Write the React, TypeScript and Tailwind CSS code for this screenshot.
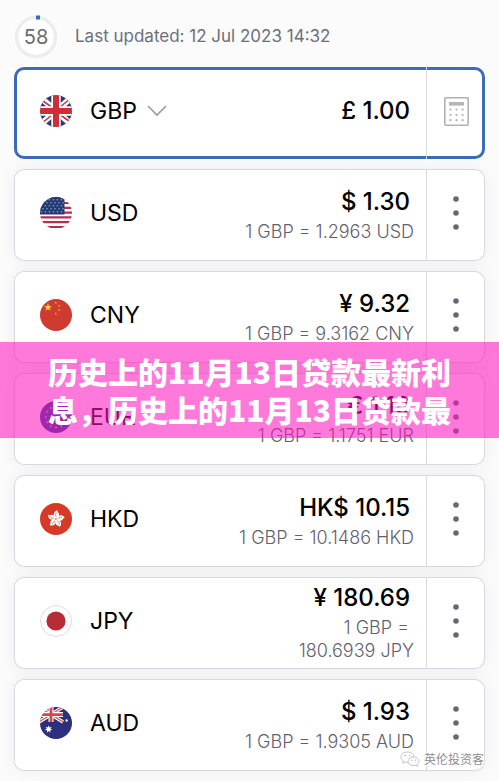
import React from "react";

type Currency = {
  code: string;
  amount: string;
  rate?: string;
};

const currencies: Currency[] = [
  { code: "GBP", amount: "£ 1.00" },
  { code: "USD", amount: "$ 1.30", rate: "1.2963" },
  { code: "CNY", amount: "¥ 9.32", rate: "9.3162" },
  { code: "EUR", amount: "€ 1.18", rate: "1.1751" },
  { code: "HKD", amount: "HK$ 10.15", rate: "10.1486" },
  { code: "JPY", amount: "¥ 180.69", rate: "180.6939" },
  { code: "AUD", amount: "$ 1.93", rate: "1.9305" },
];

const star = "M0-1 .23-.31 .95-.31 .36.12 .59.81 0 .38-.59.81-.36.12-.95-.31-.23-.31Z";
const star7 =
  "M0-1 .2-.41 .78-.62 .45-.1 .97.22 .36.28 .43.9 0 .46-.43.9-.36.28-.97.22-.45-.1-.78-.62-.2-.41Z";

const UnionJack: React.FC<{}> = () => (
  <>
    <path fill="#2b3a7d" d="M0 0h32v32H0z" />
    <path stroke="#fff" strokeWidth="6" d="M0 2 32 30M32 2 0 30" />
    <path stroke="#cc3340" strokeWidth="1.6" d="M0 4 13 13M31 3 19 13M32 28 19 19M1 29 13 19" />
    <path stroke="#fff" strokeWidth="9.4" d="M16 0v32M0 16h32" />
    <path stroke="#cc2f37" strokeWidth="6" d="M16 0v32M0 16h32" />
  </>
);

const flags: Record<string, React.ReactNode> = {
  GBP: <UnionJack />,
  USD: (
    <>
      <path fill="#fff" d="M0 0h32v32H0z" />
      <path
        stroke="#b5304f"
        strokeWidth="2.2"
        d="M0 1.2h32M0 6h32M0 10.8h32M0 15.6h32M0 20.4h32M0 25.2h32M0 30h32"
      />
      <path fill="#263a72" d="M0 0h24.5v17.4H0z" />
      {[2, 5, 8, 11, 14].map((y, row) =>
        [2, 6, 10, 14, 18, 22].map((x) => (
          <circle key={`${x}-${y}`} cx={x + (row % 2) * 1.6 - 0.6} cy={y + 0.7} r="0.8" fill="#7fa3d8" />
        ))
      )}
    </>
  ),
  CNY: (
    <>
      <path fill="#cf3b30" d="M0 0h32v32H0z" />
      <path fill="#fbd33c" transform="translate(8 8.3) scale(4.3)" d={star} />
      {[
        [15.8, 3.6],
        [19, 6.6],
        [19, 11],
        [15.8, 14.6],
      ].map(([x, y]) => (
        <path key={y} fill="#f3a83a" transform={`translate(${x} ${y}) scale(1.5)`} d={star} />
      ))}
    </>
  ),
  EUR: (
    <>
      <path fill="#22409a" d="M0 0h32v32H0z" />
      {[0, 30, 60, 90, 120, 150, 180, 210, 240, 270, 300, 330].map((a) => (
        <path
          key={a}
          fill="#f5cf3d"
          transform={`rotate(${a} 16 16) translate(16 5.5) scale(1.5)`}
          d={star}
        />
      ))}
    </>
  ),
  HKD: (
    <>
      <path fill="#d63a27" d="M0 0h32v32H0z" />
      {[8, 80, 152, 224, 296].map((a) => (
        <g key={a} transform={`rotate(${a} 16 16)`}>
          <path fill="#fff" d="M16 15.6C12.6 13.4 11.8 8.6 16.6 7.2c-1 1.6 2.6 2.8 1.8 5.4-.4 1.4-1.4 2-2.4 3Z" />
          <path stroke="#d63a27" strokeWidth=".6" fill="none" d="M15.8 13.6c-1-1.4-1-2.8-.2-4" />
        </g>
      ))}
    </>
  ),
  JPY: (
    <>
      <path fill="#fff" d="M0 0h32v32H0z" />
      <circle cx="16" cy="16" r="15.5" fill="none" stroke="#e3d5dc" />
      <circle cx="16" cy="16" r="9.6" fill="#b62c37" />
    </>
  ),
  AUD: (
    <>
      <path fill="#2b2f7c" d="M0 0h32v32H0z" />
      <path stroke="#fff" strokeWidth="3.4" d="M-1 0 23 15M23 0-1 15" />
      <path stroke="#d8434c" strokeWidth="1.2" d="M-1 0 23 15M23 0-1 15" />
      <path stroke="#fff" strokeWidth="5" d="M11 0v15M0 7.6h23" />
      <path stroke="#d8434c" strokeWidth="2.8" d="M11 0v15M0 7.6h23" />
      <path fill="#fff" transform="translate(8.6 22.2) scale(4)" d={star7} />
      <path fill="#fff" transform="translate(26.6 13.6) scale(1.8)" d={star7} />
    </>
  ),
};

const Flag: React.FC<{ code: string }> = ({ code }) => (
  <svg viewBox="0 0 32 32" className="w-8 h-8 shrink-0" fill="none" aria-hidden="true">
    <clipPath id={`flag-${code}`}>
      <circle cx="16" cy="16" r="16" />
    </clipPath>
    <g clipPath={`url(#flag-${code})`}>{flags[code]}</g>
  </svg>
);

const CalculatorIcon: React.FC<{}> = () => (
  <svg viewBox="0 0 25 29" className="w-[25px] h-[29px]" fill="none" aria-hidden="true">
    <rect x=".8" y=".8" width="23.4" height="27.4" rx="1" stroke="#b0b1b5" strokeWidth="1.6" />
    <path fill="#b5b6ba" d="M5 5h15v3.6H5z" />
    {[12.5, 18, 23.2].map((y) =>
      [6.4, 12.5, 18.6].map((x) => (
        <circle key={`${x}-${y}`} cx={x} cy={y} r="1.1" fill="#aeafb4" />
      ))
    )}
  </svg>
);

const DotsIcon: React.FC<{}> = () => (
  <svg viewBox="0 0 6 36" className="w-[6px] h-9" fill="#666876" aria-hidden="true">
    <circle cx="3" cy="4" r="2.8" />
    <circle cx="3" cy="18" r="2.8" />
    <circle cx="3" cy="32" r="2.8" />
  </svg>
);

const CurrencyRow: React.FC<{ currency: Currency }> = ({ currency }) => {
  const { code, amount, rate } = currency;
  const selected = !rate;

  return (
    <li
      className={
        selected
          ? "flex h-[92px] rounded-[10px] bg-white ring-3 ring-inset ring-[#3a6cba]"
          : "flex h-[92px] rounded-[10px] bg-white ring-1 ring-inset ring-[#d9d9dc] shadow-[0_0_16px_rgba(20,20,60,0.06)]"
      }
    >
      <div className="flex flex-1 items-center pl-[26px] pr-3">
        <div className="flex items-center gap-[18px] pb-1">
          <Flag code={code} />
          {selected ? (
            <button className="flex items-center gap-[10px] text-[23px] text-black">
              {code}
              <svg viewBox="0 0 20 12" className="w-5 h-3" fill="none" aria-hidden="true">
                <path d="m1 1 9 9 9-9" stroke="#9a9ca5" strokeWidth="1.6" />
              </svg>
            </button>
          ) : (
            <span className="text-[23px] text-black">{code}</span>
          )}
        </div>
        <div className="flex flex-1 flex-col items-end text-right">
          <div
            className={
              selected
                ? "pr-1 pb-1 text-[24px] leading-7 font-medium text-black"
                : "pr-1 text-[24px] leading-7 font-medium text-black"
            }
          >
            {amount}
          </div>
          {rate && (
            <div className="mt-1 max-w-[180px] text-[18px] leading-[23px] font-light text-[#5f626e]">
              1 GBP =&nbsp;
              <wbr />
              <span className="whitespace-nowrap">
                {rate} {code}
              </span>
            </div>
          )}
        </div>
      </div>
      <button
        aria-label={selected ? "Calculator" : `${code} options`}
        className="flex items-center justify-center w-[59px] pb-1 border-l border-[#d9d9dc]"
      >
        {selected ? <CalculatorIcon /> : <DotsIcon />}
      </button>
    </li>
  );
};

const App: React.FC<{}> = () => {
  return (
    <main className="relative bg-[#fbfbfc] px-[14px] pb-[10px] font-['Inter',sans-serif]">
      <header className="flex items-center h-[67px] pt-[6px] gap-[17px]">
        <div className="relative flex items-center justify-center w-11 h-11">
          <svg viewBox="0 0 44 44" className="absolute w-11 h-11" fill="none" aria-hidden="true">
            <circle cx="22" cy="22" r="19.5" fill="#fff" stroke="#ededee" strokeWidth="3.5" />
            <path d="M22 2.500h4" stroke="#3a6cba" strokeWidth="4" />
          </svg>
          <span className="relative text-[20px] text-[#6a6b6e]">58</span>
        </div>
        <p className="text-[17px] text-[#6c6f7a]">Last updated: 12 Jul 2023 14:32</p>
      </header>

      <ul className="flex flex-col gap-[10px]">
        {currencies.map((item) => (
          <CurrencyRow key={item.code} currency={item} />
        ))}
      </ul>

      <h1
        className="absolute inset-x-0 top-[342px] px-12 py-[10px] bg-[rgba(255,20,190,0.57)] whitespace-nowrap
          font-['Noto_Sans_CJK_SC',sans-serif] text-[30px] leading-[38px] font-black text-white"
      >
        历史上的11月13日贷款最新利
        <br />
        息，历史上的11月13日贷款最
      </h1>

      <div className="absolute right-[15px] bottom-[14px] flex items-center gap-1">
        <svg viewBox="0 0 20 16" className="w-5 h-4" fill="#fff" stroke="#b4b4b8" strokeWidth=".8" aria-hidden="true">
          <path d="M7.5 1C3.6 1 1 3.3 1 6.2c0 1.7.9 3 2.3 4L2.7 12.2l2.3-1.2c.8.2 1.6.4 2.5.4 3.8 0 6.5-2.3 6.5-5.2S11.3 1 7.5 1Z" />
          <path d="M13.5 6c-3.2 0-5.5 1.9-5.5 4.3s2.3 4.3 5.5 4.3c.7 0 1.3-.1 1.9-.3l2 1-.5-1.7c1.3-.8 2.1-2 2.1-3.3C19 7.9 16.7 6 13.5 6Z" />
          <path d="M5.3 4.2v.8M9.5 4.2v.8M11.7 8.7v.7M15.4 8.700v.7" stroke="#8e8e93" strokeWidth="1.3" />
        </svg>
        <span
          className="font-['Noto_Sans_CJK_SC',sans-serif] text-[12px] leading-4 text-[#8e8e93]
            [text-shadow:1px_1px_0_#fff]"
        >
          英伦投资客
        </span>
      </div>
    </main>
  );
};

export default App;
